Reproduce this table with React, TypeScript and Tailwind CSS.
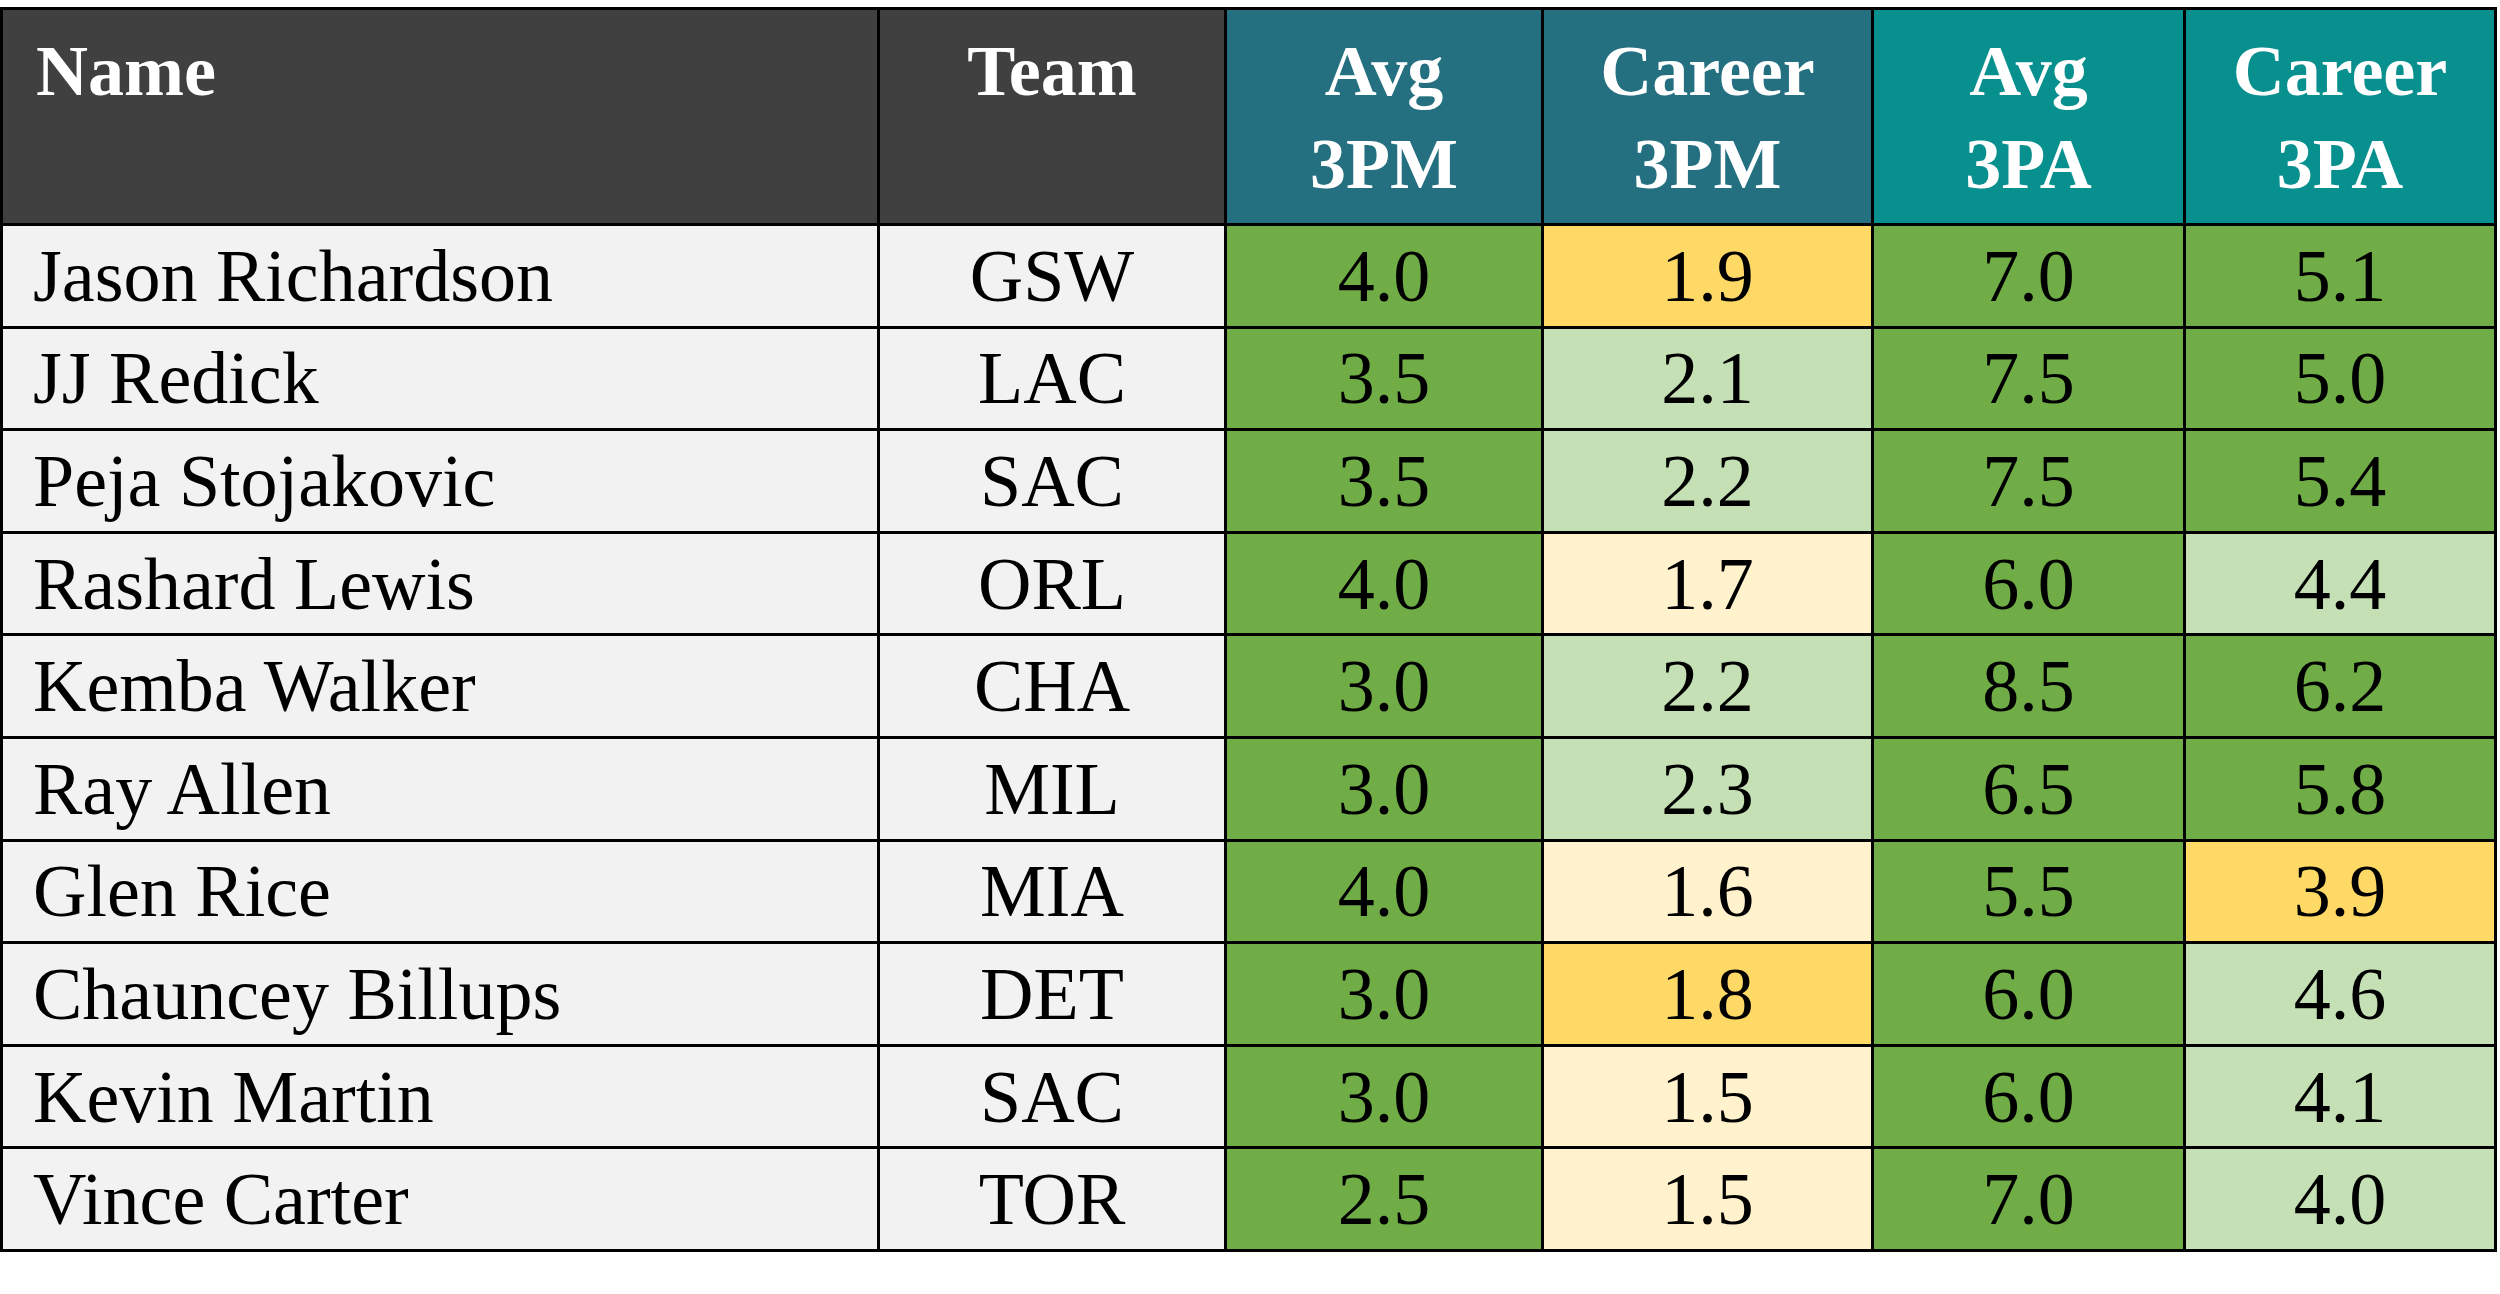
import React from 'react';

type Tone = 'g' | 'lg' | 'y' | 'ly';

const TONES: Record<Tone, string> = {
  g: 'bg-[#70ad47]',
  lg: 'bg-[#c5e0b4]',
  y: 'bg-[#ffd966]',
  ly: 'bg-[#fff2cc]',
};

type Row = {
  name: string;
  team: string;
  stats: [string, Tone][];
};

const ROWS: Row[] = [
  { name: 'Jason Richardson', team: 'GSW', stats: [['4.0', 'g'], ['1.9', 'y'], ['7.0', 'g'], ['5.1', 'g']] },
  { name: 'JJ Redick', team: 'LAC', stats: [['3.5', 'g'], ['2.1', 'lg'], ['7.5', 'g'], ['5.0', 'g']] },
  { name: 'Peja Stojakovic', team: 'SAC', stats: [['3.5', 'g'], ['2.2', 'lg'], ['7.5', 'g'], ['5.4', 'g']] },
  { name: 'Rashard Lewis', team: 'ORL', stats: [['4.0', 'g'], ['1.7', 'ly'], ['6.0', 'g'], ['4.4', 'lg']] },
  { name: 'Kemba Walker', team: 'CHA', stats: [['3.0', 'g'], ['2.2', 'lg'], ['8.5', 'g'], ['6.2', 'g']] },
  { name: 'Ray Allen', team: 'MIL', stats: [['3.0', 'g'], ['2.3', 'lg'], ['6.5', 'g'], ['5.8', 'g']] },
  { name: 'Glen Rice', team: 'MIA', stats: [['4.0', 'g'], ['1.6', 'ly'], ['5.5', 'g'], ['3.9', 'y']] },
  { name: 'Chauncey Billups', team: 'DET', stats: [['3.0', 'g'], ['1.8', 'y'], ['6.0', 'g'], ['4.6', 'lg']] },
  { name: 'Kevin Martin', team: 'SAC', stats: [['3.0', 'g'], ['1.5', 'ly'], ['6.0', 'g'], ['4.1', 'lg']] },
  { name: 'Vince Carter', team: 'TOR', stats: [['2.5', 'g'], ['1.5', 'ly'], ['7.0', 'g'], ['4.0', 'lg']] },
];

const HEADERS: { top: string; bottom?: string; bg: string; align: string }[] = [
  { top: 'Name', bg: 'bg-[#404040]', align: 'text-left pl-[33px]' },
  { top: 'Team', bg: 'bg-[#404040]', align: 'text-center' },
  { top: 'Avg', bottom: '3PM', bg: 'bg-[#246f80]', align: 'text-center' },
  { top: 'Career', bottom: '3PM', bg: 'bg-[#246f80]', align: 'text-center' },
  { top: 'Avg', bottom: '3PA', bg: 'bg-[#08908e]', align: 'text-center' },
  { top: 'Career', bottom: '3PA', bg: 'bg-[#08908e]', align: 'text-center' },
];

export default function App() {
  return (
    <div className="min-h-[1294px] w-[2500px] bg-white pt-[7px] font-['Liberation_Serif',serif] text-black">
      <div className="grid w-[2497px] grid-cols-[874px_344px_314px_327px_309px_308px] grid-rows-[213px_repeat(10,99.6px)] gap-[3px] bg-black p-[3px]">
        {HEADERS.map((h, i) => (
          <div
            key={i}
            className={`${h.bg} ${h.align} pt-[15px] text-[72px] font-bold leading-[93px] text-white`}
          >
            <div>{h.top}</div>
            {h.bottom && <div>{h.bottom}</div>}
          </div>
        ))}

        {ROWS.map((r) => (
          <React.Fragment key={r.name}>
            <div className="flex items-center bg-[#f2f2f2] pl-[30px] text-[74px] leading-none">
              {r.name}
            </div>
            <div className="flex items-center justify-center bg-[#f2f2f2] text-[74px] leading-none">
              {r.team}
            </div>
            {r.stats.map(([v, tone], j) => (
              <div
                key={j}
                className={`flex items-center justify-center ${TONES[tone]} text-[74px] leading-none`}
              >
                {v}
              </div>
            ))}
          </React.Fragment>
        ))}
      </div>
    </div>
  );
}
